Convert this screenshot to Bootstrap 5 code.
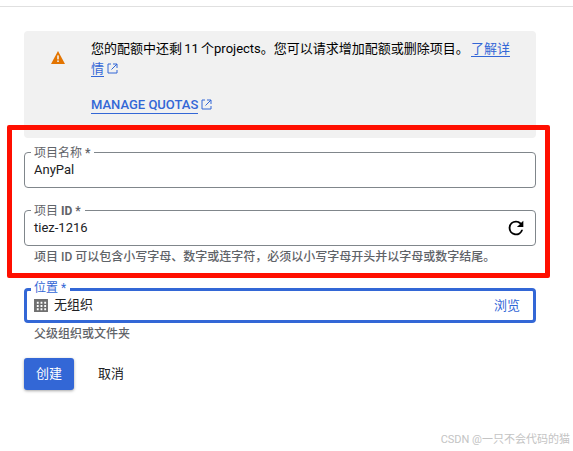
<!DOCTYPE html>
<html lang="zh-CN">
<head>
<meta charset="utf-8">
<title>新建项目</title>
<link href="https://cdn.jsdelivr.net/npm/bootstrap@5.3.0/dist/css/bootstrap.min.css" rel="stylesheet">
<style>
html,body{height:451px;overflow:hidden}
body{position:relative;font-family:Roboto,"Noto Sans CJK SC",sans-serif;font-size:13px;line-height:20px;color:#202124;background:#fff}
.topline{height:1px;background:#e0e0e0;margin-top:6px}
.page-form{padding:24px 37px 0 24px}
.notice{background:#f1f1f1;border-radius:4px;height:107px;padding:8px 24px 0 0;color:#000}
.notice-icon{width:67px;padding-left:27px;padding-top:12px;flex:none}
.notice-line{word-spacing:-1px}
.notice a{color:#3367d6;text-decoration:none;border-bottom:1px solid #3367d6}
.ext{vertical-align:-1px;margin-left:3px}
.quotas{display:block;margin-top:16px;font-weight:500;line-height:20px}
.quotas a{display:inline-block;line-height:17px}
.outfield{position:relative;border:1px solid #80868b;border-radius:4px;height:36px;padding:0 8px 0 9px;display:flex;align-items:center;margin-top:14px;color:#202124}
.outfield .val{margin-top:-1px;flex:1}
.floatlabel{position:absolute;left:6px;top:-8px;background:#fff;padding:0 4px 0 3px;font-size:12px;line-height:16px;color:#5f6368}
.floatlabel b{font-weight:700}
.f2{margin-top:22px}
.f3{margin-top:23px;border:3px solid #3367d6;height:35px;padding:0 13px 0 7px}
.f3 .floatlabel{color:#3367d6;left:4px;top:-11px}
.hintline{font-size:12px;line-height:16px;color:#5f6368;padding-left:10px}
.h1{margin-top:3px}
.h2{margin-top:3px}
.browse{color:#3367d6}
.org-icon{margin-right:6px;flex:none}
.actions{margin-top:16px;gap:24px}
.create-btn{width:50px;height:32px;padding:0;background:#3367d6;border:0;color:#fff;font-size:13px;line-height:30px;border-radius:3px;box-shadow:0 1px 3px rgba(0,0,0,.35)}
.create-btn:hover{background:#3367d6;color:#fff}
.cancel-btn{padding:0;border:0;color:#202124;font-size:13px;height:32px;line-height:30px}
.redbox{position:absolute;left:7px;top:125px;width:543px;height:153px;border:5px solid #ff0f00;border-radius:2px;pointer-events:none}
.wm{position:absolute;right:3px;top:433px;font-size:11px;line-height:14px;color:#c4c4c4}
</style>
</head>
<body>
<div class="topline"></div>
<form class="page-form">
  <div class="notice d-flex">
    <div class="notice-icon">
      <svg class="d-block" width="14" height="13" viewBox="0 0 14 13"><path d="M7 0 14 13H0Z" fill="#e37400"/><rect x="6.2" y="4.400" width="1.600" height="4" fill="#f1f1f1"/><rect x="6.2" y="9.400" width="1.600" height="1.600" fill="#f1f1f1"/></svg>
    </div>
    <div class="flex-grow-1">
      <div class="notice-line">您的配额中还剩 11 个projects。您可以请求增加配额或删除项目。 <a href="#">了解详情</a><svg class="ext" width="11" height="11" viewBox="0 0 11 11" fill="none" stroke="#3367d6"><path d="M4 1H1V10H10V7M6 1H10V5M10 1 4.500 6.500"/></svg></div>
      <div class="quotas"><a href="#">MANAGE QUOTAS</a><svg class="ext" width="11" height="11" viewBox="0 0 11 11" fill="none" stroke="#3367d6"><path d="M4 1H1V10H10V7M6 1H10V5M10 1 4.500 6.500"/></svg></div>
    </div>
  </div>
  <div class="outfield">
    <span class="floatlabel">项目名称 <b>*</b></span>
    <span class="val">AnyPal</span>
  </div>
  <div class="outfield f2">
    <span class="floatlabel">项目 <b>ID *</b></span>
    <span class="val">tiez-1216</span>
    <svg width="22" height="22" viewBox="0 0 24 24"><path fill="#000" d="M17.650 6.350A7.960 7.960 0 0 0 12 4a8 8 0 1 0 7.730 10h-2.080A6 6 0 1 1 12 6c1.660 0 3.140.69 4.220 1.780L13 11h7V4z"/></svg>
  </div>
  <div class="hintline h1">项目 ID 可以包含小写字母、数字或连字符，必须以小写字母开头并以字母或数字结尾。</div>
  <div class="outfield f3">
    <span class="floatlabel">位置 *</span>
    <svg class="org-icon" width="14" height="13" viewBox="0 0 15 14"><path fill="#6f6f6f" fill-rule="evenodd" d="M0 0H15V14H0ZM3 3V5H5V3ZM7 3V5H9V3ZM11 3V5H13V3ZM3 6.500V8.500H5V6.500ZM7 6.500V8.500H9V6.500ZM11 6.500V8.500H13V6.500ZM3 10V12H5V10ZM7 10V12H9V10ZM11 10V12H13V10Z"/></svg>
    <span class="val">无组织</span>
    <span class="browse">浏览</span>
  </div>
  <div class="hintline h2">父级组织或文件夹</div>
  <div class="actions d-flex">
    <button type="button" class="btn create-btn">创建</button>
    <button type="button" class="btn cancel-btn">取消</button>
  </div>
</form>
<div class="redbox"></div>
<div class="wm">CSDN @一只不会代码的猫</div>
<script src="https://cdn.jsdelivr.net/npm/bootstrap@5.3.0/dist/js/bootstrap.bundle.min.js"></script>
</body>
</html>
